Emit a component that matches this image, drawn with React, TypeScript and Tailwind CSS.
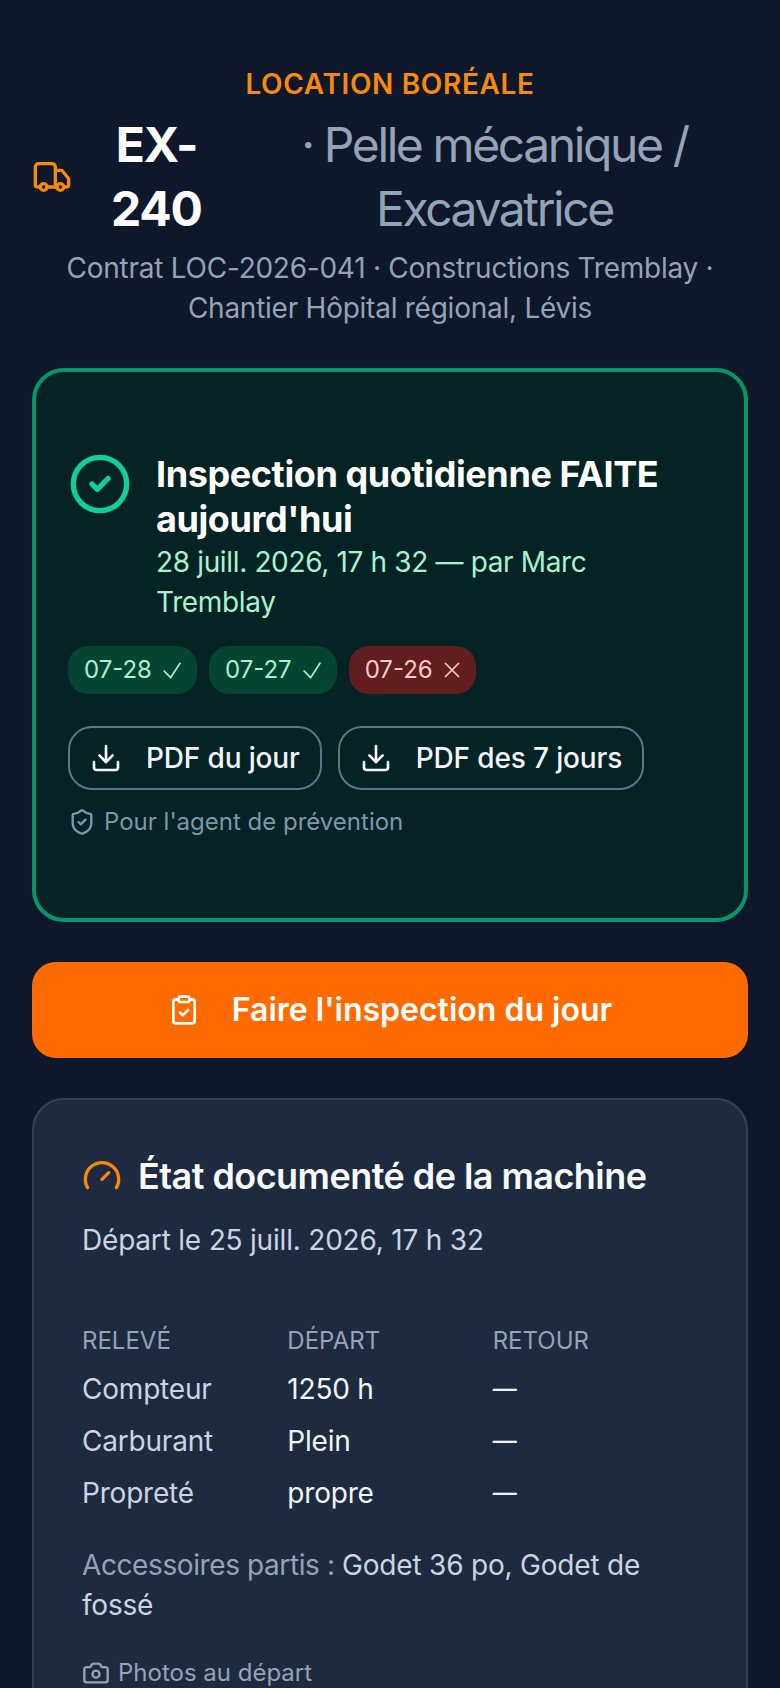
import React from 'react';
import { Camera, CircleCheck, ClipboardCheck, Download, Gauge, ShieldCheck, Truck } from 'lucide-react';

const days = [
  { label: '07-28', ok: true },
  { label: '07-27', ok: true },
  { label: '07-26', ok: false },
];

const rows = [
  { name: 'Compteur', start: '1250 h' },
  { name: 'Carburant', start: 'Plein' },
  { name: 'Propreté', start: 'propre' },
];

const PdfButton: React.FC<{ label: string }> = ({ label }) => (
  <button className="flex h-16 items-center gap-6 rounded-3xl border-2 border-[#5f7588] px-5 text-[28px] font-medium tracking-[-0.15px] text-[#f1f5f9]">
    <Download className="size-8" strokeWidth={2} />
    {label}
  </button>
);

const App: React.FC = () => {
  return (
    <div className="h-[1688px] overflow-hidden bg-[#0f172a] px-8 pt-16 font-['Inter',sans-serif]">
      <header className="mb-10 text-center">
        <p className="text-[28px] leading-10 font-semibold tracking-[0.65px] text-[#f58a0b]">LOCATION BORÉALE</p>
        <h1 className="mt-[9px] flex items-center justify-center gap-4 text-[48px] leading-16">
          <Truck className="size-10 shrink-0 text-[#f58a0b]" />
          <span className="font-bold tracking-[-1.2px] text-white">EX-240</span>
          <span className="font-normal tracking-[-2.4px] text-[#94a3b8]">· Pelle mécanique / Excavatrice</span>
        </h1>
        <p className="mt-[7px] text-[28px] leading-10 tracking-[-0.25px] text-[#94a3b8]">
          Contrat LOC-2026-041 · Constructions Tremblay · Chantier Hôpital régional, Lévis
        </p>
      </header>

      <section className="rounded-[32px] border-4 border-[#059669] bg-[#052224] px-8 py-20">
        <div className="flex gap-6">
          <CircleCheck className="size-16 shrink-0 text-[#10d097]" />
          <div>
            <h2 className="text-[36px] leading-[45px] font-bold tracking-[-0.4px] text-white">Inspection quotidienne FAITE aujourd'hui</h2>
            <p className="max-w-[520px] text-[28px] leading-10 tracking-[-0.35px] text-[#a7f3d0]">28 juill. 2026, 17 h 32 — par Marc Tremblay</p>
          </div>
        </div>
        <div className="mt-6 flex gap-3">
          {days.map((day) => (
            <span
              key={day.label}
              className={
                day.ok
                  ? 'flex items-center gap-[11px] rounded-[20px] bg-[#054333] px-4 py-2 text-2xl leading-8 text-[#a7f3d0]'
                  : 'flex items-center gap-[11px] rounded-[20px] bg-[#621e1f] px-4 py-2 text-2xl leading-8 text-[#fecaca]'
              }
            >
              {day.label}
              {day.ok ? (
                <svg width="18" height="17" viewBox="0 0 18 17" fill="none" stroke="currentColor" strokeWidth="1.7">
                  <path d="M0.6 8.5 L7.6 15.6 L17.4 0.6" />
                </svg>
              ) : (
                <svg width="16" height="16" viewBox="0 0 16 16" fill="none" stroke="currentColor" strokeWidth="1.7">
                  <path d="M1 1 L15 15 M15 1 L1 15" />
                </svg>
              )}
            </span>
          ))}
        </div>
        <div className="mt-8 flex gap-4">
          <PdfButton label="PDF du jour" />
          <PdfButton label="PDF des 7 jours" />
        </div>
        <p className="mt-4 flex items-center gap-2 text-2xl leading-8 text-[#7f98a7]">
          <ShieldCheck className="size-7" />
          Pour l'agent de prévention
        </p>
      </section>

      <button className="mt-10 flex h-24 w-full items-center justify-center gap-8 rounded-3xl bg-[#ff6b00] text-[32px] font-semibold text-white">
        <ClipboardCheck className="size-8" />
        Faire l'inspection du jour
      </button>

      <section className="mt-10 rounded-[32px] border-2 border-[#334155] bg-[#1e2a40] p-12">
        <h2 className="flex items-center gap-4 text-[36px] leading-14 font-semibold tracking-[-0.55px] text-[#f8fafc]">
          <Gauge className="size-10 text-[#f58a0b]" />
          État documenté de la machine
        </h2>
        <p className="mt-4 text-[28px] leading-10 tracking-[-0.2px] text-[#cbd5e1]">Départ le 25 juill. 2026, 17 h 32</p>
        <div className="mt-[65px] grid grid-cols-3 pb-1.5 text-2xl leading-8 text-[#94a3b8]">
          <span>RELEVÉ</span>
          <span>DÉPART</span>
          <span>RETOUR</span>
        </div>
        {rows.map((row) => (
          <div key={row.name} className="grid grid-cols-3 py-1.5 text-[28px] leading-10 tracking-[-0.2px]">
            <span className="text-[#cbd5e1]">{row.name}</span>
            <span className="text-[#f1f5f9]">{row.start}</span>
            <span className="text-2xl leading-10 font-medium text-[#f1f5f9]">—</span>
          </div>
        ))}
        <p className="mt-[26px] text-[28px] leading-10 tracking-[-0.2px] text-[#cbd5e1]">
          <span className="tracking-[-0.4px] text-[#94a3b8]">Accessoires partis : </span>
          Godet 36 po, Godet de fossé
        </p>
        <p className="mt-8 flex items-center gap-2 text-2xl leading-8 text-[#94a3b8]">
          <Camera className="size-7" />
          Photos au départ
        </p>
      </section>
    </div>
  );
};

export default App;
